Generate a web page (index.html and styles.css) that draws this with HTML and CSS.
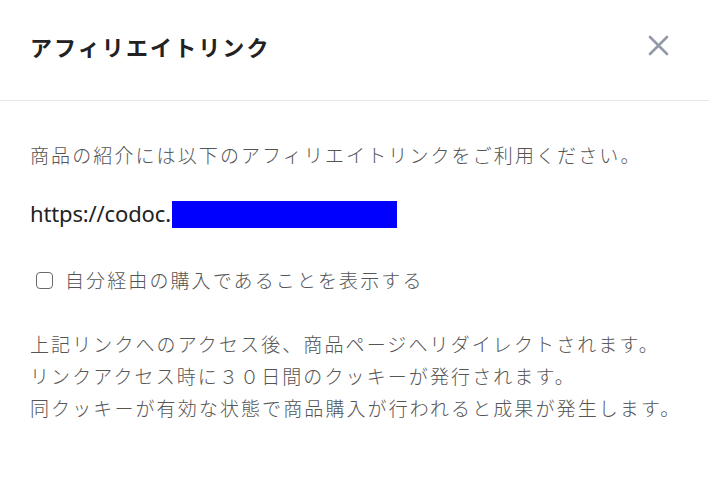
FILE: index.html
```html
<!DOCTYPE html>
<html lang="ja">
<head>
<meta charset="utf-8">
<link rel="stylesheet" href="styles.css">
</head>
<body>
<div class="modal">
  <header class="modal-header">
    <h1 class="modal-title">アフィリエイトリンク</h1>
    <button class="close" aria-label="閉じる">
      <svg width="21" height="21" viewBox="0 0 21 21"><path d="M2 2L19 19M19 2L2 19" stroke="#929aa7" stroke-width="2.6" stroke-linecap="round" fill="none"/></svg>
    </button>
  </header>
  <section class="modal-body">
    <p class="text">商品の紹介には以下のアフィリエイトリンクをご利用ください。</p>
    <p class="url"><span class="url-text">https://codoc.</span><span class="redact"></span></p>
    <label class="check"><span class="box"></span><span class="text">自分経由の購入であることを表示する</span></label>
    <p class="text notes">上記リンクへのアクセス後、商品ページへリダイレクトされます。<br>リンクアクセス時に３０日間のクッキーが発行されます。<br>同クッキーが有効な状態で商品購入が行われると成果が発生します。</p>
  </section>
</div>
</body>
</html>
```
FILE: styles.css
```css
html, body { margin: 0; padding: 0; background: #fff; }
body { font-family: "Noto Sans CJK JP", "Noto Sans", sans-serif; }
.modal { width: 709px; height: 484px; }
.modal-header {
  height: 100px;
  border-bottom: 1px solid #e8e8e8;
  display: flex;
  align-items: center;
  justify-content: space-between;
  padding: 0 40px 0 30px;
  box-sizing: content-box;
}
.modal-title {
  margin: 0;
  font-size: 22px;
  font-weight: 700;
  letter-spacing: 2.1px;
  color: #222;
  line-height: 1;
  padding-bottom: 9px;
}
.close { background: none; border: 0; padding: 0; display: flex; margin-top: -10px; }
.modal-body { padding: 38px 30px 0; }
.text {
  margin: 0;
  font-size: 19px;
  letter-spacing: 2.1px;
  color: #555;
  font-weight: 300;
  line-height: 32px;
  white-space: nowrap;
}
.url {
  margin: 28px 0 0;
  display: flex;
  align-items: center;
  font-family: "Noto Sans", "Open Sans", sans-serif;
  font-size: 22px;
  color: #222;
  height: 30px;
  letter-spacing: -0.15px;
}
.url-text { padding-bottom: 2px; }
.redact { display: inline-block; width: 225px; height: 27px; background: #0000ff; margin-left: 1px; }
.check { margin-top: 35px; display: flex; align-items: center; padding-left: 6px; }
.box { width: 15px; height: 15px; border: 1.5px solid #6a6a6a; border-radius: 4px; margin-right: 12px; flex: none; }
.notes { margin-top: 32px; }
```
